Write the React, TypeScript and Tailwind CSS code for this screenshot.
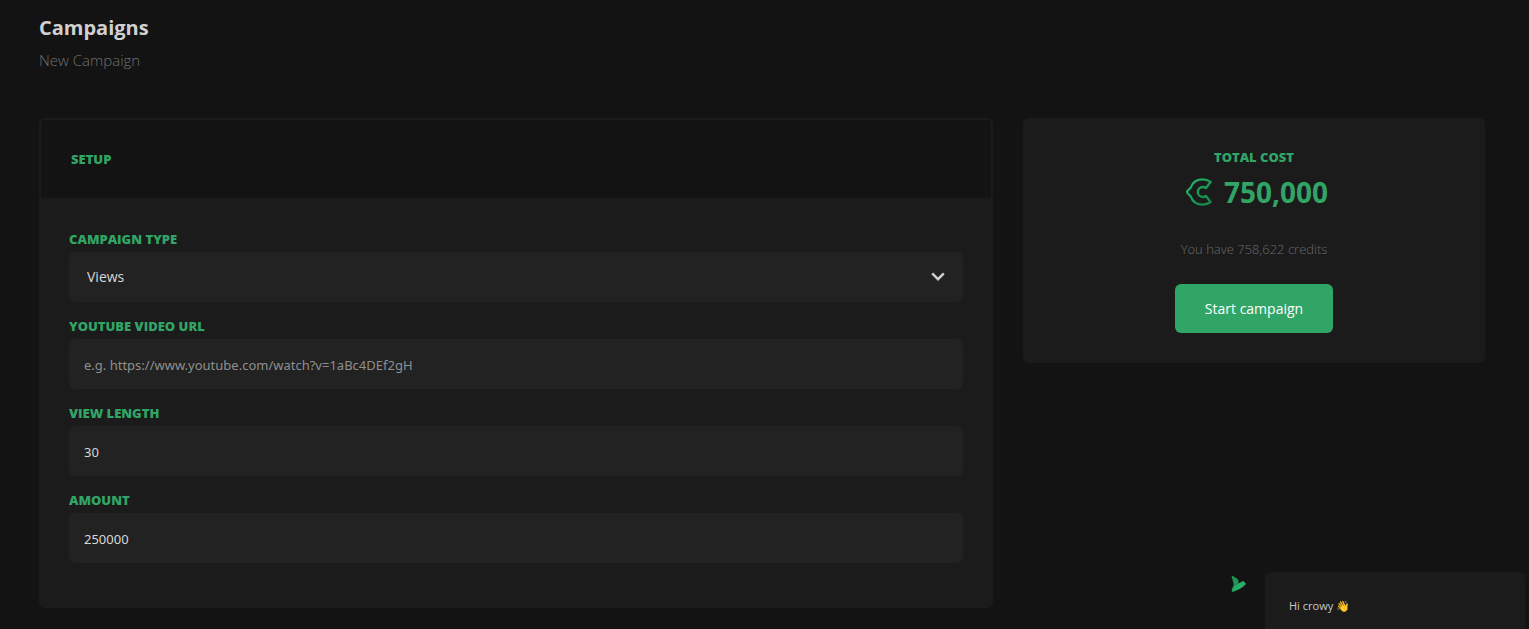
import React, {useState} from "react";

const labelClass = "block text-[13px] leading-[18px] mb-1 font-extrabold uppercase text-[#31a566]"
const fieldClass = "block w-full h-[50px] rounded-md bg-[#222222] text-[#d8d8d8] outline-none"
const inputClass = "font-['Noto_Sans','Open_Sans',sans-serif] px-[15px] pt-0.5 text-[13px] placeholder:text-[#8f8f8f]"

function CreditIcon() {
    return <svg
        className="w-[26px] h-7"
        viewBox="0 0 26 28"
        fill="none"
        stroke="url(#credit)"
        strokeWidth="2.3"
        strokeLinejoin="round"
        aria-hidden="true"
    >
        <defs>
            <linearGradient id="credit" x1="0" y1="0" x2="1" y2="1">
                <stop offset="0" stopColor="#2bb36d"/>
                <stop offset="1" stopColor="#0f8547"/>
            </linearGradient>
        </defs>
        <path
            d="M24.6 4C22.2 2.2 19.4 1.3 16.6 1.3C11 1.3 6.4 4.6 4.6 9.8L1.6 12.8C1 13.5 1 14.5 1.6 15.2L4.6 18.2C6.4 23.4 11 26.7 16.6 26.7C19.4 26.7 22.2 25.8 24.6 24L20 18C19.1 18.7 18 19 16.8 19C14 19 11.8 16.8 11.8 14C11.8 11.2 14 9 16.8 9C18 9 19.1 9.4 20 10Z"/>
    </svg>
}

function BirdIcon() {
    return <svg className="w-4 h-[18px]" viewBox="0 0 16 18" aria-hidden="true">
        <path fill="#1e9455" d="M0.6 1.2C0.6 0.6 1.2 0.6 1.7 0.9L6 3.6C7.2 4.4 7.7 5.6 7.5 7.2L6.4 11L1 16.8C0.4 15.8 0.6 14.8 1 13.8L2.8 9.4Z"/>
        <path fill="#27ad67" d="M7.2 8.6L12.2 6L14.6 8.2C15 8.7 14.8 9.3 14.3 9.7C10.8 13.2 6 15.4 1 17.2C2 13.8 4.2 10.6 7.2 8.6Z"/>
    </svg>
}

function SetupCard() {
    const [type, setType] = useState('views')
    const [url, setUrl] = useState('')
    const [length, setLength] = useState('30')
    const [amount, setAmount] = useState('250000')

    return <section className="lg:col-span-2 rounded-md bg-[#1b1b1b]">
        <div className="border-2 border-[#1b1b1b] rounded-md">
            <h2 className="rounded bg-[#131313] p-[30px] text-[13px] leading-[18px] font-extrabold uppercase text-[#31a566]">
                Setup
            </h2>
        </div>
        <form className="px-[30px] pt-[30px] pb-[45px] space-y-[15px]">
            <div>
                <label htmlFor="type" className={labelClass}>Campaign type</label>
                <div className="relative">
                    <select
                        id="type"
                        value={type}
                        onChange={(e) => setType(e.target.value)}
                        className={`${fieldClass} appearance-none pl-[18px] pr-12 text-sm`}
                    >
                        <option value="views">Views</option>
                        <option value="likes">Likes</option>
                        <option value="subscribers">Subscribers</option>
                    </select>
                    <svg
                        className="absolute right-[18px] top-5 w-3.5 h-2.5 pointer-events-none"
                        viewBox="0 0 14 10"
                        fill="none"
                        stroke="#cfcfcf"
                        strokeWidth="2.4"
                        aria-hidden="true"
                    >
                        <path d="M1.2 1.4L7 7.2L12.8 1.4"/>
                    </svg>
                </div>
            </div>
            <div>
                <label htmlFor="url" className={labelClass}>Youtube video url</label>
                <input
                    id="url"
                    type="text"
                    value={url}
                    onChange={(e) => setUrl(e.target.value)}
                    placeholder="e.g. https://www.youtube.com/watch?v=1aBc4DEf2gH"
                    className={`${fieldClass} ${inputClass}`}
                />
            </div>
            <div>
                <label htmlFor="length" className={labelClass}>View length</label>
                <input
                    id="length"
                    type="text"
                    value={length}
                    onChange={(e) => setLength(e.target.value)}
                    className={`${fieldClass} ${inputClass}`}
                />
            </div>
            <div>
                <label htmlFor="amount" className={labelClass}>Amount</label>
                <input
                    id="amount"
                    type="text"
                    value={amount}
                    onChange={(e) => setAmount(e.target.value)}
                    className={`${fieldClass} ${inputClass}`}
                />
            </div>
        </form>
    </section>
}

function CostCard() {
    return <aside className="flex flex-col items-center rounded-md bg-[#1b1b1b] p-[30px]">
        <h2 className="text-[13px] leading-[18px] font-extrabold uppercase text-[#31a566]">Total cost</h2>
        <div className="flex items-center gap-3 mt-1 pl-1.5 text-[28px] leading-[44px] font-bold text-[#31a566]">
            <CreditIcon/>
            <span>750,000</span>
        </div>
        <p className="mt-6 text-[13px] leading-[22px] font-light text-[#6a6a6a]">You have 758,622 credits</p>
        <button
            type="button"
            className="mt-6 h-[49px] px-[30px] rounded-md bg-[#31a566] text-sm text-white hover:bg-[#2b935b]"
        >
            Start campaign
        </button>
    </aside>
}

export default function App() {
    return <div
        className="min-h-screen bg-[#131313] pl-[39px] pr-11 pb-5 font-['Open_Sans','Noto_Sans',sans-serif]">
        <header className="pt-3.5 pb-[46px]">
            <h1 className="text-xl leading-7 font-bold text-[#d0d0d0]">Campaigns</h1>
            <p className="mt-1.5 text-[15px] leading-6 font-light text-[#707070]">New Campaign</p>
        </header>
        <main className="grid grid-cols-1 lg:grid-cols-3 gap-[30px] items-start">
            <SetupCard/>
            <CostCard/>
        </main>
        <div className="fixed right-1 bottom-0 flex items-start gap-[18px]">
            <div className="pt-[3px]">
                <BirdIcon/>
            </div>
            <div className="w-[260px] rounded-t-md bg-[#1b1b1b] px-6 pt-6 pb-[13px] text-[11px] leading-5 text-[#c8c8c8]">
                Hi crowy <span role="img" aria-label="waving hand">👋</span>
            </div>
        </div>
    </div>
}
